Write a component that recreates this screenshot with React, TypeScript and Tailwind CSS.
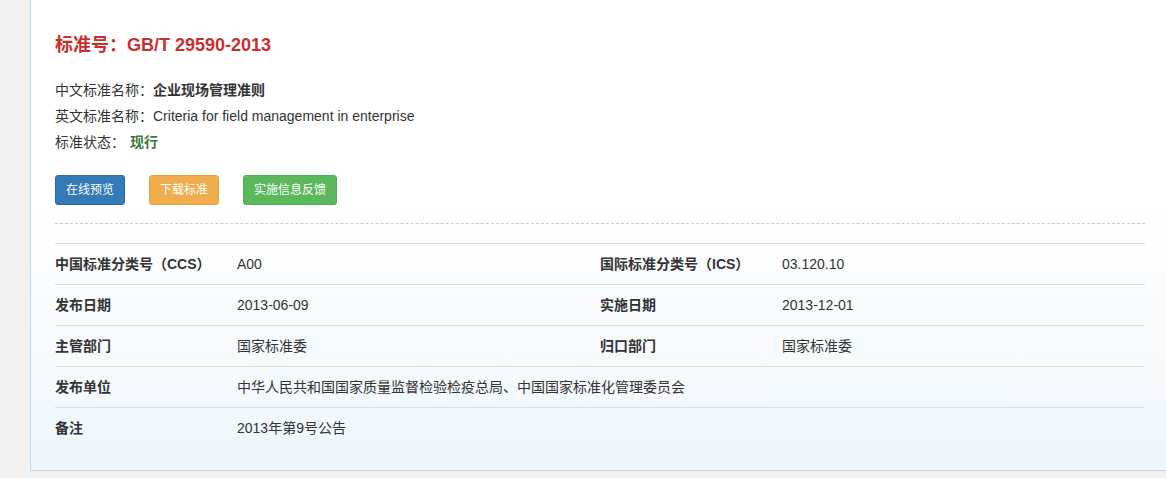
import React from "react";

const font = "font-['Liberation_Sans','Noto_Sans_CJK_SC',sans-serif]";

type Row = { label: string; value: string; label2?: string; value2?: string };

const rows: Row[] = [
    { label: "中国标准分类号（CCS）", value: "A00", label2: "国际标准分类号（ICS）", value2: "03.120.10" },
    { label: "发布日期", value: "2013-06-09", label2: "实施日期", value2: "2013-12-01" },
    { label: "主管部门", value: "国家标准委", label2: "归口部门", value2: "国家标准委" },
    { label: "发布单位", value: "中华人民共和国国家质量监督检验检疫总局、中国国家标准化管理委员会" },
    { label: "备注", value: "2013年第9号公告" },
];

const StandardDetail = () => {
    return (
        <div className="w-[1140px] border-x border-b border-[#abdaf6] bg-gradient-to-b from-white from-45% to-[#edf6fd] px-6 pb-[21px] pt-[34px]">
            <h3 className="text-[18px] font-bold leading-[22px] text-[#c9302c]">
                标准号：GB/T 29590-2013
            </h3>

            <div className="mt-[21px] text-[14px] leading-[26px] text-[#333]">
                <p>
                    中文标准名称：<span className="font-bold">企业现场管理准则</span>
                </p>
                <p>英文标准名称：Criteria for field management in enterprise</p>
                <p>
                    标准状态：<span className="ml-[5px] font-bold text-[#3c763d]">现行</span>
                </p>
            </div>

            <div className="mt-[20px] flex gap-6">
                <button className="h-[30px] rounded-[3px] border border-[#2e6da4] bg-[#337ab7] px-[10px] text-[12px] text-white">
                    在线预览
                </button>
                <button className="h-[30px] rounded-[3px] border border-[#eea236] bg-[#f0ad4e] px-[10px] text-[12px] text-white">
                    下载标准
                </button>
                <button className="h-[30px] rounded-[3px] border border-[#4cae4c] bg-[#5cb85c] px-[10px] text-[12px] text-white">
                    实施信息反馈
                </button>
            </div>

            <div className="mt-[18px] border-t border-dashed border-[#ccc]" />

            <table className="mt-[19px] w-full table-fixed text-[14px] text-[#333]">
                <colgroup>
                    <col className="w-[182px]" />
                    <col className="w-[363px]" />
                    <col className="w-[182px]" />
                    <col />
                </colgroup>
                <tbody>
                    {rows.map((r) => (
                        <tr key={r.label} className="h-[41px] border-t border-[#ddd]">
                            <td className="pt-px font-bold">{r.label}</td>
                            {r.label2 ? (
                                <>
                                    <td className="pt-px">{r.value}</td>
                                    <td className="pt-px font-bold">{r.label2}</td>
                                    <td className="pt-px">{r.value2}</td>
                                </>
                            ) : (
                                <td colSpan={3} className="pt-px">{r.value}</td>
                            )}
                        </tr>
                    ))}
                </tbody>
            </table>
        </div>
    );
};

export default function App() {
    return (
        <div className={`${font} h-[478px] w-full overflow-hidden bg-[#f2f1f0] pl-[30px]`}>
            <StandardDetail />
        </div>
    );
}
